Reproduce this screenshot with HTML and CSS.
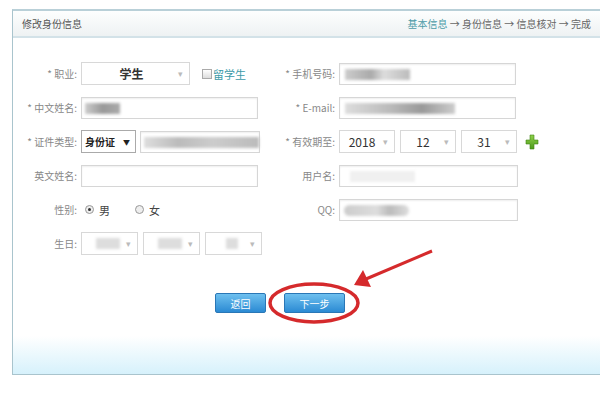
FILE: index.html
```html
<!DOCTYPE html>
<html lang="zh">
<head>
<meta charset="utf-8">
<link rel="stylesheet" href="styles.css">
</head>
<body>
<div class="panel">
  <div class="head">
    <span class="title">修改身份信息</span>
    <span class="steps"><span class="cur">基本信息</span> → 身份信息 → 信息核对 → 完成</span>
  </div>
  <div class="form">
    <div class="lbl">* 职业:</div>
    <div class="cell">
      <div class="sel job"><b>学生</b><i class="arr">▾</i></div>
      <span class="chk"></span><span class="teal">留学生</span>
    </div>
    <div class="lbl">* 手机号码:</div>
    <div class="cell"><div class="inp wide"><span class="blur b1"></span></div></div>

    <div class="lbl">* 中文姓名:</div>
    <div class="cell"><div class="inp"><span class="blur b3"></span></div></div>
    <div class="lbl">* E-mail:</div>
    <div class="cell"><div class="inp wide"><span class="blur b4"></span></div></div>

    <div class="lbl">* 证件类型:</div>
    <div class="cell">
      <div class="sel idt"><b>身份证</b><i class="arrd">▼</i></div>
      <div class="inp idn"><span class="blur b5"></span></div>
    </div>
    <div class="lbl">* 有效期至:</div>
    <div class="cell">
      <div class="sel dt"><span>2018</span><i class="arr">▾</i></div>
      <div class="sel dt"><span>12</span><i class="arr">▾</i></div>
      <div class="sel dt"><span>31</span><i class="arr">▾</i></div>
      <svg class="plus" width="14" height="16" viewBox="0 0 14 16"><defs><linearGradient id="g" x1="0" y1="0" x2="0" y2="1"><stop offset="0" stop-color="#8fd14a"/><stop offset="1" stop-color="#4c9a1a"/></linearGradient></defs><path d="M5 1h4v5h4v4H9v5H5v-5H1V6h4z" fill="url(#g)" stroke="#3f8416" stroke-width="0.6"/></svg>
    </div>

    <div class="lbl">英文姓名:</div>
    <div class="cell"><div class="inp"></div></div>
    <div class="lbl">用户名:</div>
    <div class="cell"><div class="inp wide2"><span class="blur b6"></span></div></div>

    <div class="lbl">性别:</div>
    <div class="cell sex"><span class="radio on"></span><span>男</span><span class="radio"></span><span>女</span></div>
    <div class="lbl">QQ:</div>
    <div class="cell"><div class="inp wide2"><span class="blur b7"></span></div></div>

    <div class="lbl">生日:</div>
    <div class="cell">
      <div class="sel bd"><span class="blur b8"></span><i class="arr">▾</i></div>
      <div class="sel bd"><span class="blur b8"></span><i class="arr">▾</i></div>
      <div class="sel bd"><span class="blur b9"></span><i class="arr">▾</i></div>
    </div>
    <div></div><div></div>
  </div>
  <div class="btns">
    <span class="btn back">返回</span>
    <span class="btn next">下一步</span>
  </div>
  <svg class="mark" width="600" height="400" viewBox="0 0 600 400">
    <ellipse cx="314" cy="303" rx="44" ry="19" fill="none" stroke="#d52a2c" stroke-width="3.5"/>
    <line x1="432" y1="251" x2="366" y2="279" stroke="#d52a2c" stroke-width="3"/>
    <path d="M354 285 L363 270 L371 287 Z" fill="#d52a2c"/>
  </svg>
</div>
</body>
</html>
```

FILE: styles.css
```css
html, body { margin: 0; padding: 0; background: #fff; overflow: hidden; }
body { width: 600px; height: 400px; font-family: "Noto Sans CJK SC", "Liberation Sans", sans-serif; font-size: 11px; color: #666; }
.panel {
  position: relative;
  margin: 9px 0 0 12px;
  width: 600px;
  height: 366px;
  border: 1px solid #a9c4cd;
  border-top: 2px solid #b9d0d8;
  background: linear-gradient(to bottom, #fff 0, #fff 325px, #d3f0fb 366px);
  box-sizing: border-box;
}
.head {
  height: 25px;
  display: flex;
  align-items: center;
  justify-content: space-between;
  padding: 0 20px 0 9px;
  background: linear-gradient(to bottom, #fdfefe, #eef2f3);
  border-bottom: 2px solid #d3e2e8;
  font-size: 10px;
  color: #666;
}
.head .title { color: #555; }
.steps { color: #666; }
.steps .cur { color: #4c9ba8; }
.form {
  display: grid;
  grid-template-columns: 64px 188px 62px auto;
  column-gap: 4px;
  row-gap: 11px;
  grid-auto-rows: 23px;
  padding-top: 24px;
}
.lbl { text-align: right; line-height: 23px; color: #888; font-size: 10px; white-space: nowrap; }
.cell { display: flex; align-items: center; gap: 5px; }
.inp {
  width: 177px; height: 22px; box-sizing: border-box;
  border: 1px solid #d6d6d6; box-shadow: inset 0 1px 2px #eee;
  position: relative; background: #fff;
}
.inp.wide { width: 177px; }
.inp.wide2 { width: 179px; }
.inp.idn { width: 120px; margin-left: -1px; }
.sel {
  height: 23px; box-sizing: border-box; border: 1px solid #d8d8d8; background: #fff;
  display: flex; align-items: center; position: relative; color: #333;
}
.sel .arr { position: absolute; right: 6px; top: 4px; font-style: normal; font-size: 9px; color: #bbb; }
.job { width: 109px; justify-content: center; font-size: 12px; padding-right: 8px; }
.job b { font-weight: bold; color: #333; }
.chk { width: 8px; height: 8px; border: 1px solid #aaa; background: linear-gradient(#fff, #ddd); margin-left: 7px; margin-right: -4px; }
.teal { color: #3c9aa8; font-size: 11px; }
.idt { width: 55px; padding-left: 3px; border-color: #aaa; font-size: 10px; gap: 8px; }
.idt b { color: #222; }
.arrd { font-style: normal; font-size: 7px; color: #222; }
.dt { width: 56px; justify-content: center; font-size: 12px; color: #333; padding-right: 10px; }
.plus { margin-left: 3px; }
.bd { width: 57px; }
.sex { gap: 5px; padding-left: 4px; color: #444; }
.sex span:nth-child(3) { margin-left: 20px; }
.radio { width: 7px; height: 7px; border: 1px solid #999; border-radius: 50%; background: #eee; position: relative; }
.radio.on::after { content: ""; position: absolute; left: 2px; top: 2px; width: 3px; height: 3px; border-radius: 50%; background: #333; }
.blur { position: absolute; top: 5px; height: 11px; background: #bbb; filter: blur(1.5px); }
.b1 { left: 5px; width: 65px; background: linear-gradient(90deg, #ccc, #aaa 40%, #ddd 60%, #bbb); }
.b3 { left: 3px; width: 35px; background: linear-gradient(90deg, #ccc, #999 50%, #aaa); }
.b4 { left: 5px; width: 110px; background: linear-gradient(90deg, #ddd, #bbb 40%, #999 70%, #ccc); }
.b5 { left: 3px; width: 115px; background: linear-gradient(90deg, #ddd, #bbb 30%, #ccc 60%, #bbb); }
.b6 { left: 10px; width: 65px; background: #f0f0f0; }
.b7 { left: 4px; width: 65px; background: linear-gradient(90deg, #ccc, #ddd 50%, #bbb 70%, #ddd); border-radius: 6px; }
.b8 { left: 14px; width: 24px; background: #ddd; }
.b9 { left: 20px; width: 12px; background: #ddd; }
.btns { display: flex; gap: 18px; margin: 38px 0 0 202px; }
.btn {
  height: 20px; line-height: 19px; box-sizing: border-box; text-align: center;
  color: #fff; font-size: 10px; border: 1px solid #2a77b6; border-radius: 2px;
  background: linear-gradient(to bottom, #6ec0ef, #2b8ad3);
}
.back { width: 51px; }
.next { width: 61px; }
.mark { position: absolute; left: -13px; top: -11px; pointer-events: none; }
```
